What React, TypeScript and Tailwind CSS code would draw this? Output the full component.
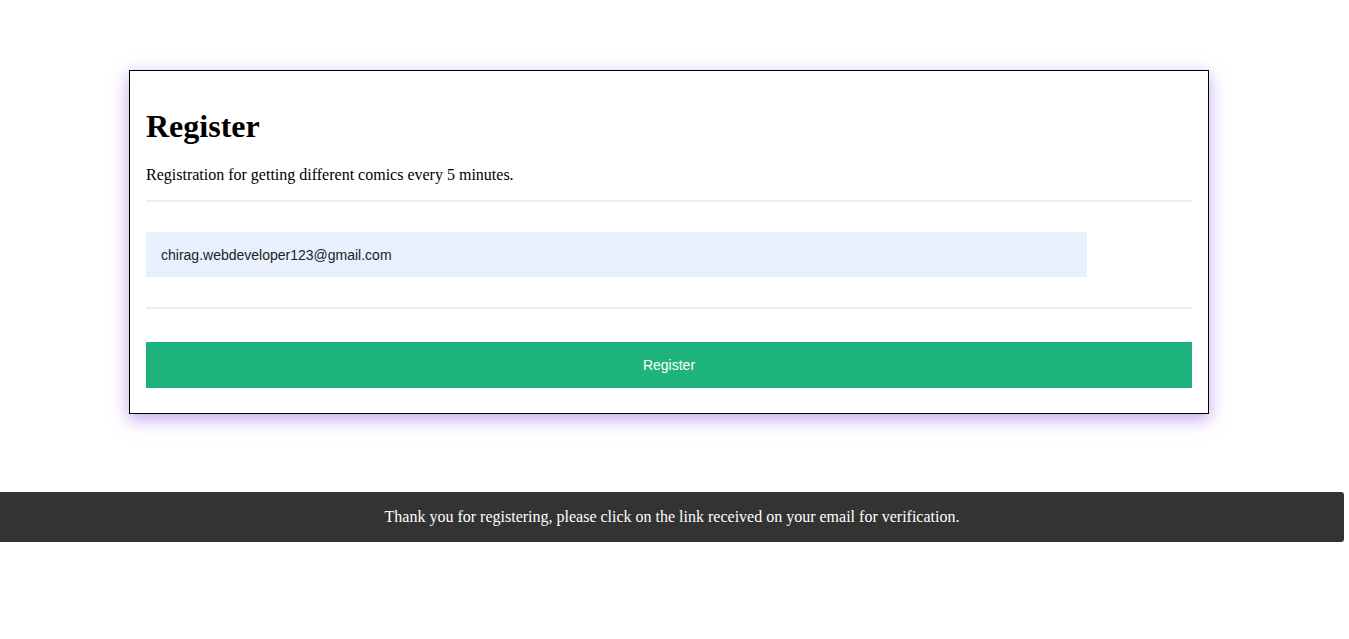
import { FC } from "react";

const serif = "font-['Liberation_Serif','Times_New_Roman',serif]";
const sans = "font-['Liberation_Sans',Arial,sans-serif]";

const RegisterCard: FC = () => {
  return (
    <div className="ml-[129px] mt-[69px] w-[1080px] border border-black bg-white px-4 pt-4 pb-[25px] shadow-[0_5px_16px_rgba(130,70,220,0.5)]">
      <h1 className={`${serif} my-[21px] text-[32px] font-bold leading-[37px] text-black`}>
        Register
      </h1>
      <p className={`${serif} mb-4 text-base leading-[18px] text-black`}>
        Registration for getting different comics every 5 minutes.
      </p>
      <div className="h-[2px] bg-[#eeeeee]"></div>
      <input
        type="email"
        defaultValue="chirag.webdeveloper123@gmail.com"
        className={`${sans} mt-[30px] block h-[45px] w-[90%] bg-[#e8f0fe] px-[15px] text-sm text-[#222] outline-none`}
      />
      <div className="mt-[30px] h-[2px] bg-[#eeeeee]"></div>
      <button
        className={`${sans} mt-[33px] block h-[46px] w-full bg-[#1eb37c] text-sm text-white`}
      >
        Register
      </button>
    </div>
  );
};

const App: FC = () => {
  return (
    <div className="min-h-[639px] bg-white pt-[1px]">
      <RegisterCard />
      <div
        className={`${serif} mt-[78px] flex h-[50px] w-[1344px] items-center justify-center rounded-r-[3px] bg-[#333333] text-base text-white`}
      >
        Thank you for registering, please click on the link received on your email for verification.
      </div>
    </div>
  );
};

export default App;
